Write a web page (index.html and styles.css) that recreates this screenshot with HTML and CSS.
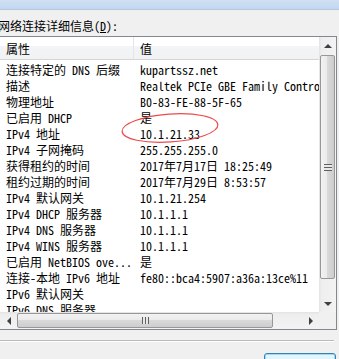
FILE: index.html
```html
<!DOCTYPE html>
<html lang="zh-CN">
<head>
    <meta charset="UTF-8">
    <title>网络连接详细信息</title>
    <link rel="stylesheet" href="styles.css">
</head>
<body>
    <div class="titlebar"></div>
    <div class="dialog">
        <div class="caption">网络连接详细信息(<u>D</u>):</div>
        <div class="listview">
            <div class="list-body">
                <div class="list-head">
                    <div class="col-name">属性</div>
                    <div class="col-value">值</div>
                </div>
                <div class="row"><div class="col-name">连接特定的 DNS 后缀</div><div class="col-value">kupartssz.net</div></div>
                <div class="row"><div class="col-name">描述</div><div class="col-value">Realtek PCIe GBE Family Controller</div></div>
                <div class="row"><div class="col-name">物理地址</div><div class="col-value">B0-83-FE-88-5F-65</div></div>
                <div class="row"><div class="col-name">已启用 DHCP</div><div class="col-value">是</div></div>
                <div class="row"><div class="col-name">IPv4 地址</div><div class="col-value">10.1.21.33</div></div>
                <div class="row"><div class="col-name">IPv4 子网掩码</div><div class="col-value">255.255.255.0</div></div>
                <div class="row"><div class="col-name">获得租约的时间</div><div class="col-value">2017年7月17日 18:25:49</div></div>
                <div class="row"><div class="col-name">租约过期的时间</div><div class="col-value">2017年7月29日 8:53:57</div></div>
                <div class="row"><div class="col-name">IPv4 默认网关</div><div class="col-value">10.1.21.254</div></div>
                <div class="row"><div class="col-name">IPv4 DHCP 服务器</div><div class="col-value">10.1.1.1</div></div>
                <div class="row"><div class="col-name">IPv4 DNS 服务器</div><div class="col-value">10.1.1.1</div></div>
                <div class="row"><div class="col-name">IPv4 WINS 服务器</div><div class="col-value">10.1.1.1</div></div>
                <div class="row"><div class="col-name">已启用 NetBIOS ove...</div><div class="col-value">是</div></div>
                <div class="row"><div class="col-name">连接-本地 IPv6 地址</div><div class="col-value">fe80::bca4:5907:a36a:13ce%11</div></div>
                <div class="row"><div class="col-name">IPv6 默认网关</div><div class="col-value"></div></div>
                <div class="row"><div class="col-name">IPv6 DNS 服务器</div><div class="col-value"></div></div>
            </div>
            <div class="vscroll">
                <div class="arrow-btn"><span class="tri tri-up"></span></div>
                <div class="vthumb"><span class="grip-h"></span></div>
                <div class="track"></div>
                <div class="arrow-btn"><span class="tri tri-down"></span></div>
            </div>
            <div class="hscroll">
                <div class="arrow-btn"><span class="tri tri-left"></span></div>
                <div class="hthumb"><span class="grip-v"></span></div>
                <div class="track"></div>
                <div class="arrow-btn"><span class="tri tri-right"></span></div>
            </div>
            <div class="corner"></div>
            <svg class="mark" width="110" height="40" viewBox="0 0 110 40">
                <ellipse cx="52" cy="20" rx="48" ry="14" transform="rotate(-4 52 20)" fill="none" stroke="#ec4b4b" stroke-width="1.2"/>
            </svg>
        </div>
        <div class="separator"></div>
        <div class="footer">
            <button class="btn">关闭(<u>C</u>)</button>
        </div>
    </div>
</body>
</html>
```

FILE: styles.css
```css
body {
    margin: 0;
    background-color: #f0f0f0;
    font-family: "Noto Sans Mono CJK SC", "Noto Sans CJK SC", "Liberation Mono", monospace;
    font-size: 12px;
    color: #000;
    overflow: hidden;
}
.titlebar {
    height: 9px;
    background: linear-gradient(#cfe0f4, #c2d7ef);
    border-bottom: 1px solid #b4c7de;
}
.dialog {
    display: flex;
    flex-direction: column;
}
.caption {
    height: 26px;
    line-height: 31px;
    margin-left: -2px;
    white-space: nowrap;
}
.listview {
    position: relative;
    display: grid;
    grid-template-columns: 1fr 17px;
    grid-template-rows: 275px 17px;
    width: 338px;
    margin-left: -1px;
    box-sizing: border-box;
    border: 1px solid #828790;
    background-color: #fff;
}
.list-body {
    overflow: hidden;
    white-space: nowrap;
}
.list-head {
    display: flex;
    height: 22px;
    line-height: 24px;
    background: linear-gradient(#ffffff, #ffffff 40%, #f3f4f6 41%, #f1f2f4);
    border-bottom: 1px solid #d5d5d5;
    margin-bottom: 1px;
}
.list-head .col-name {
    border-right: 1px solid #e3e5e8;
}
.row {
    display: flex;
    height: 16px;
    line-height: 17px;
}
.col-name {
    width: 134px;
    box-sizing: border-box;
    padding-left: 6px;
    flex-shrink: 0;
}
.col-value {
    padding-left: 6px;
}
.vscroll {
    display: flex;
    flex-direction: column;
    background: linear-gradient(to right, #e3e3e3, #eeeeee 15%, #f3f3f3);
}
.hscroll {
    display: flex;
    background: linear-gradient(#e3e3e3, #eeeeee 15%, #f3f3f3);
}
.corner {
    background-color: #f0f0f0;
}
.arrow-btn {
    width: 17px;
    height: 17px;
    display: flex;
    align-items: center;
    justify-content: center;
    flex-shrink: 0;
}
.vscroll .arrow-btn:first-child {
    height: 18px;
}
.track {
    flex: 1;
}
.tri {
    width: 0;
    height: 0;
    border: 4px solid transparent;
}
.tri-up {
    border-bottom-color: #404040;
    border-top-width: 0;
}
.tri-down {
    border-top-color: #404040;
    border-bottom-width: 0;
}
.tri-left {
    border-right-color: #404040;
    border-left-width: 0;
}
.tri-right {
    border-left-color: #404040;
    border-right-width: 0;
}
.vthumb {
    height: 224px;
    margin: 0 1px;
    box-sizing: border-box;
    border: 1px solid #979797;
    border-radius: 2px;
    background: linear-gradient(to right, #f2f2f2, #ebebeb 45%, #d9d9d9 50%, #cdcdcd);
    display: flex;
    align-items: center;
    justify-content: center;
}
.hthumb {
    width: 256px;
    margin: 1px 0;
    box-sizing: border-box;
    border: 1px solid #979797;
    border-radius: 2px;
    background: linear-gradient(#f2f2f2, #ebebeb 45%, #d9d9d9 50%, #cdcdcd);
    display: flex;
    align-items: center;
    justify-content: center;
}
.grip-h {
    width: 8px;
    height: 7px;
    background: repeating-linear-gradient(#606060 0 1px, #e8e8e8 1px 3px);
}
.grip-v {
    width: 7px;
    height: 7px;
    background: repeating-linear-gradient(to right, #606060 0 1px, #e8e8e8 1px 3px);
}
.mark {
    position: absolute;
    left: 118px;
    top: 71px;
}
.separator {
    margin-top: 10px;
    width: 334px;
    border-top: 1px solid #b6bcc0;
    border-bottom: 1px solid #fff;
}
.footer {
    display: flex;
    justify-content: flex-end;
    padding: 11px 3px 0 0;
}
.btn {
    width: 72px;
    height: 23px;
    font-family: inherit;
    font-size: 12px;
    border: 1px solid #3c7fb1;
    border-radius: 3px;
    background: linear-gradient(#eaf6fd, #d9f0fc 50%, #bee6fd 51%, #a7d9f5);
    box-shadow: inset 0 0 0 1px #98dcf5;
    padding: 0;
}
```
